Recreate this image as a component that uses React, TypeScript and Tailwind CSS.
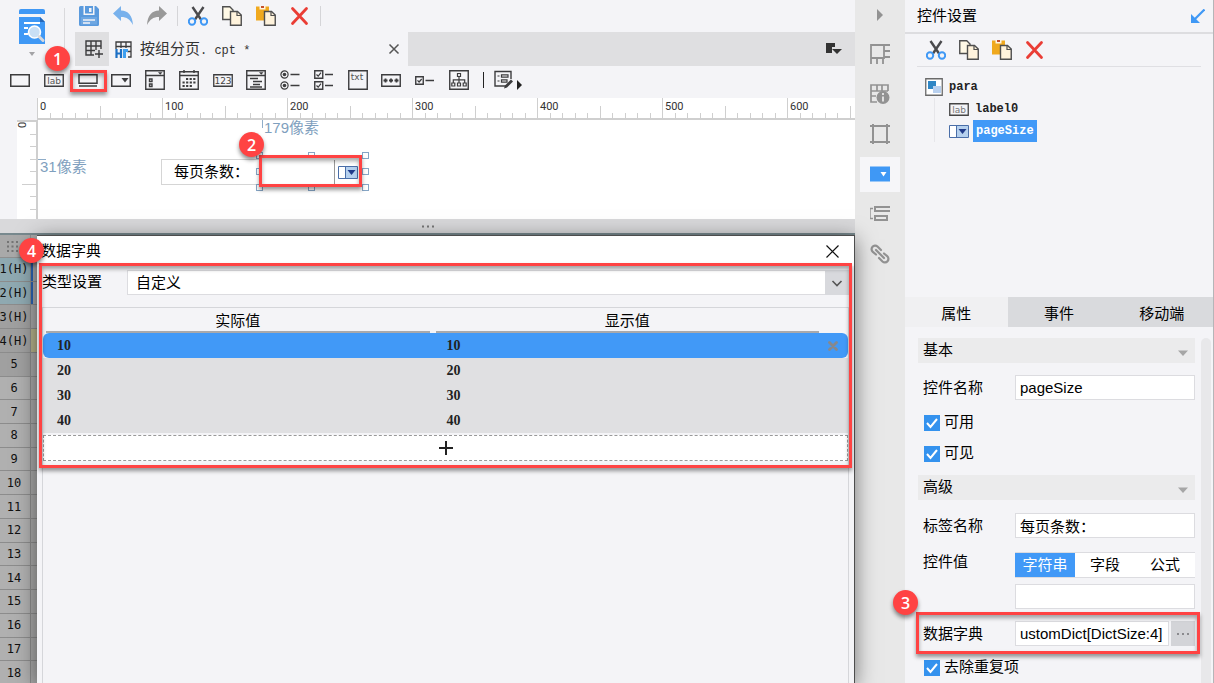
import { useState } from 'react';
import type { ReactNode } from 'react';
import clsx from 'clsx';

/* ---------- shared bits ---------- */

const CJK = "font-['Liberation_Sans','Noto_Sans_CJK_SC',sans-serif]";

function Badge({ n, className }: { n: number; className: string }) {
  return (
    <span
      className={clsx(
        "absolute z-30 flex h-[25px] w-[25px] items-center justify-center rounded-full bg-[#ff4343] font-['Open_Sans',sans-serif] text-[16px] font-semibold text-white shadow-[0_3px_4px_rgba(0,0,0,0.45)]",
        className
      )}
    >
      {n}
    </span>
  );
}

function Marker({ className }: { className: string }) {
  return (
    <span
      className={clsx(
        'pointer-events-none absolute z-20 border-[3px] border-[#ff4343] shadow-[0_3px_4px_rgba(0,0,0,0.4),inset_0_3px_4px_rgba(0,0,0,0.35)]',
        className
      )}
    />
  );
}

function Icon({ children, size = 20, className }: { children: ReactNode; size?: number; className?: string }) {
  return (
    <svg width={size} height={size} viewBox={`0 0 ${size} ${size}`} fill="none" className={clsx('block shrink-0', className)} aria-hidden="true">
      {children}
    </svg>
  );
}

/* ---------- edit icons ---------- */

const SaveIcon = () => (
  <Icon>
    <path d="M0 1.500A1.500 1.500 0 0 1 1.500 0H17l3 3v15.500A1.500 1.500 0 0 1 18.500 20h-17A1.500 1.500 0 0 1 0 18.500Z" fill="#5a9add" />
    <path d="M4.500 0h11v9h-11z" fill="#f4f4f7" />
    <path d="M6 0h8v7.500H6z" fill="#5a9add" />
    <path d="M10 2h2.500v4H10z" fill="#f4f4f7" />
    <path d="M2 11h16v7.500H2z" fill="#6ea7e2" />
    <path d="M4 14h12M4 17h7" stroke="#f4f4f7" strokeWidth="1.500" />
  </Icon>
);

const UndoIcon = () => (
  <Icon>
    <path d="M0 7.500 8 0v4.500c7 0 11.500 5 12 14.500-3-5.500-6-8-12-8V15Z" fill="#78b1ec" />
  </Icon>
);

const RedoIcon = () => (
  <Icon>
    <path d="M20 7.500 12 0v4.500C5 4.500.5 9.500 0 19c3-5.500 6-8 12-8V15Z" fill="#999" />
  </Icon>
);

const CutIcon = () => (
  <Icon>
    <path d="M4.500 1 13 13.500M15.500 1 7 13.500" stroke="#4a4a4d" strokeWidth="2.400" />
    <circle cx="4" cy="15.500" r="3.200" stroke="#3f98f5" strokeWidth="2" />
    <circle cx="16" cy="15.500" r="3.200" stroke="#3f98f5" strokeWidth="2" />
  </Icon>
);

const CopyIcon = () => (
  <Icon>
    <path d="M.75.75h7L11 4v9.500H.75Z" fill="#fff9e6" stroke="#4f4f4f" strokeWidth="1.400" />
    <path d="M8.500 5.500h7L19.250 9v10.250H8.500Z" fill="#fff3dc" stroke="#4f4f4f" strokeWidth="1.400" />
    <path d="M15 5.500V9.500h4" stroke="#4f4f4f" strokeWidth="1.200" />
  </Icon>
);

const PasteIcon = () => (
  <Icon>
    <path d="M0 .5h13v14H0z" fill="#f0a91e" />
    <path d="M3.500 0h6v3.500h-6z" fill="#fff5e0" />
    <path d="M5 0h3v2H5z" fill="#c4502e" />
    <path d="M8.500 5.500h7L19.250 9v10.250H8.500Z" fill="#fff3dc" stroke="#4f4f4f" strokeWidth="1.400" />
    <path d="M15 5.500V9.500h4" stroke="#4f4f4f" strokeWidth="1.200" />
  </Icon>
);

const DeleteIcon = () => (
  <Icon>
    <path d="m2.500 2.500 14 15m0-15-14 15" stroke="#ea3d35" strokeWidth="2.800" strokeLinecap="round" />
  </Icon>
);

const editIcons = [
  { label: '剪切', Glyph: CutIcon },
  { label: '复制', Glyph: CopyIcon },
  { label: '粘贴', Glyph: PasteIcon },
  { label: '删除', Glyph: DeleteIcon },
];

/* ---------- widget toolbar ---------- */

const INK = '#3c3c3e';
const svgText = "font-['DejaVu_Sans',sans-serif]";

const widgets: { id: string; art: ReactNode }[] = [
  { id: 'textfield', art: <path d="M.75 4.750h18.500v11.500H.75z" stroke={INK} strokeWidth="1.500" /> },
  {
    id: 'label',
    art: (
      <>
        <path d="M.75 4.750h18.500v11.500H.75z" stroke={INK} strokeWidth="1.400" />
        <text x="10" y="14" textAnchor="middle" fontSize="9" fill="#555" className={svgText}>lab</text>
      </>
    ),
  },
  {
    id: 'button',
    art: <path d="M1 4.750h18v8.500H1zM1 16h18" stroke={INK} strokeWidth="1.500" />,
  },
  {
    id: 'combo',
    art: (
      <>
        <path d="M.75 4.750h18.500v11.500H.75z" stroke={INK} strokeWidth="1.500" />
        <path d="M10.500 8h7L14 12.500z" fill={INK} />
      </>
    ),
  },
  {
    id: 'combocheck',
    art: (
      <>
        <path d="M.75.75h18.500v18.500H.75zM1 5.500h18M4.500 9h2.500v2.500H4.500zM4.500 14h2.500v2.500H4.500z" stroke={INK} strokeWidth="1.400" />
        <path d="M13 2.200h4.500l-2.250 2.500z" fill={INK} />
      </>
    ),
  },
  {
    id: 'date',
    art: (
      <>
        <path d="M.75 1.750h18.500v17.500H.75zM1 5.500h18" stroke={INK} strokeWidth="1.400" />
        <path d="M5 0v3M15 0v3" stroke={INK} strokeWidth="1.500" />
        <path d="M7 9h10M3.500 12.500h13.500M3.500 16h10" stroke={INK} strokeWidth="2.200" strokeDasharray="2.200 1.400" />
      </>
    ),
  },
  {
    id: 'number',
    art: (
      <>
        <path d="M.75 4.750h18.500v11.500H.75z" stroke={INK} strokeWidth="1.300" />
        <text x="10" y="14" textAnchor="middle" fontSize="9" fill="#444" className={svgText}>123</text>
      </>
    ),
  },
  {
    id: 'tree',
    art: (
      <>
        <path d="M.75.75h18.500v18.500H.75zM1 5.500h18" stroke={INK} strokeWidth="1.400" />
        <path d="M13 2.200h4.500l-2.250 2.500z" fill={INK} />
        <path d="M4 8.500h8M7 11.500h9M7 14.500h7M4 17h12" stroke={INK} strokeWidth="1.300" />
      </>
    ),
  },
  {
    id: 'radiogroup',
    art: (
      <>
        <circle cx="4.500" cy="4.500" r="3.600" stroke={INK} strokeWidth="1.200" />
        <circle cx="4.500" cy="15.500" r="3.600" stroke={INK} strokeWidth="1.200" />
        <circle cx="4.500" cy="4.500" r="1.800" fill={INK} />
        <circle cx="4.500" cy="15.500" r="1.800" fill={INK} />
        <path d="M10.500 4.500h9M10.500 15.500h9" stroke={INK} strokeWidth="1.500" />
      </>
    ),
  },
  {
    id: 'checkgroup',
    art: (
      <>
        <path d="M.75.75h8v7.500h-8zM.75 11.750h8v7.500h-8z" stroke={INK} strokeWidth="1.400" />
        <path d="m2.500 4.500 1.700 1.700L7 2.700M2.500 15.500l1.700 1.700L7 13.700" stroke={INK} strokeWidth="1.200" />
        <path d="M11 4.500h8M11 15.500h8" stroke={INK} strokeWidth="1.500" />
      </>
    ),
  },
  {
    id: 'textarea',
    art: (
      <>
        <path d="M.75.75h18.500v18.500H.75z" stroke={INK} strokeWidth="1.400" />
        <text x="9" y="9.500" textAnchor="middle" fontSize="9" fill="#555" className={svgText}>txt</text>
      </>
    ),
  },
  {
    id: 'password',
    art: (
      <>
        <path d="M.75 4.750h18.500v11.500H.75z" stroke={INK} strokeWidth="1.400" />
        <path d="M2.500 10.500h4M8 10.500h4M13.500 10.500h4M4.500 8.500v4M10 8.500v4M15.500 8.500v4" stroke={INK} strokeWidth="1.800" />
      </>
    ),
  },
  {
    id: 'checkbox',
    art: (
      <>
        <path d="M.75 6.750h7.500v7.500H.75z" stroke={INK} strokeWidth="1.400" />
        <path d="m2.500 10.300 1.600 1.700L6.700 9" stroke={INK} strokeWidth="1.200" />
        <path d="M10.500 10.500h8.500" stroke={INK} strokeWidth="1.500" />
      </>
    ),
  },
  {
    id: 'viewtree',
    art: (
      <>
        <path d="M.75.75h18.500v18.500H.75z" stroke={INK} strokeWidth="1.400" />
        <path d="M8.500 3.500h3v3h-3zM2.800 13h3v3h-3zM8.500 13h3v3h-3zM14.200 13h3v3h-3zM10 6.500V13M4.300 13V9.800h11.400V13" stroke={INK} strokeWidth="1.200" />
      </>
    ),
  },
];

function WidgetBar() {
  return (
    <div className="relative flex h-8 items-center pb-1 pl-[10px]">
      <div className="flex w-[459px] justify-between">
        {widgets.map((w) => (
          <button key={w.id} type="button" aria-label={w.id}>
            <Icon>{w.art}</Icon>
          </button>
        ))}
      </div>
      <span className="ml-[14px] h-4 w-px bg-[#222]" />
      <button type="button" aria-label="form" className="ml-[10px] flex items-end">
        <Icon>
          <path d="M17 9V1.500H1V16h11" stroke={INK} strokeWidth="1.400" />
          <path d="M3.500 6h2M3.500 11h2M7.500 4.800H14v2.400H7.500zM7.500 9.800H13v2.400H7.500z" stroke={INK} strokeWidth="1.200" />
          <path d="m10 18.500 1-3 6-6 2 2-6 6z" fill={INK} />
        </Icon>
        <Icon size={10} className="ml-0.5">
          <path d="M1 0v10l5-5z" fill="#222" />
        </Icon>
      </button>
      <Marker className="left-[70px] top-1 h-[22px] w-[37px]" />
    </div>
  );
}

/* ---------- header ---------- */

function Header() {
  return (
    <header className="relative flex h-[66px]">
      <div className="flex w-16 flex-col items-center pt-2">
        <Icon size={36}>
          <path d="M5 3a2 2 0 0 1 2-2h22a2 2 0 0 1 2 2v3H5zM5 9h21l5 5v22H5z" fill="#3f98f5" />
          <path d="M26 9l5 5h-5z" fill="#2467b8" />
          <path d="M10 15h16M10 20h4M10 26h4" stroke="#fff" strokeWidth="2" />
          <circle cx="20.500" cy="24" r="6" fill="#c9dff5" stroke="#fff" strokeWidth="1.600" />
          <path d="m25 28.500 4 4" stroke="#d8d8dc" strokeWidth="3" strokeLinecap="round" />
        </Icon>
        <Icon size={8} className="mt-[6px]">
          <path d="M1 2h6L4 6z" fill="#a3a3a6" />
        </Icon>
      </div>
      <span className="mt-2 h-[40px] w-px bg-[#d9d9dc]" />
      <div className="flex min-w-0 flex-1 flex-col">
        <div className="flex h-8 items-center pl-[14px]">
          <div className="flex gap-[14px]">
            <button type="button" aria-label="保存"><SaveIcon /></button>
            <button type="button" aria-label="撤销"><UndoIcon /></button>
            <button type="button" aria-label="重做"><RedoIcon /></button>
          </div>
          <span className="mx-[10px] h-5 w-px bg-[#d5d5d8]" />
          <div className="flex gap-[14px]">
            {editIcons.map(({ label, Glyph }) => (
              <button key={label} type="button" aria-label={label}><Glyph /></button>
            ))}
          </div>
          <span className="mx-[10px] h-5 w-px bg-[#d5d5d8]" />
        </div>
        <div className="ml-[10px] flex flex-1 bg-[#dfdfe1]">
          <button type="button" aria-label="新建" className="flex w-[34px] items-center justify-center pl-1">
            <Icon size={18}>
              <path d="M16 9V1H1v14h8M1 6h15M1 10.500h9M6 1v14M11 1v9M14 10v8M10 14h8" stroke="#3c3c3e" strokeWidth="1.400" />
            </Icon>
          </button>
          <div className="flex w-[299px] items-center bg-[#f4f4f7] pl-[6px] pr-2">
            <Icon size={17}>
              <path d="M1 8V1h15v15h-3M1 5.500h15M6 1v6M11 1v6M16 10.500h-4" stroke="#3c3c3e" strokeWidth="1.300" />
              <path d="M1.500 8v9M6 8v9M1 12.500h5" stroke="#1c6fc4" strokeWidth="2.200" />
              <path d="M8 8h5v3h-2v6H8z" fill="#3fa0f0" />
            </Icon>
            <span className="ml-2 flex-1 whitespace-pre text-[15px] text-[#333]">
              按组分页<span className="font-['Liberation_Mono',monospace] text-[12px]">. cpt *</span>
            </span>
            <button type="button" aria-label="关闭">
              <Icon size={12}>
                <path d="m1.500 1.500 9 9m0-9-9 9" stroke="#555" strokeWidth="1.500" />
              </Icon>
            </button>
          </div>
          <button type="button" aria-label="文件列表" className="ml-auto mr-[13px]">
            <Icon size={16}>
              <path d="M0 2h9v4H6v6H0z" fill="#333" />
              <path d="M6 8h10l-5 5z" fill="#333" />
            </Icon>
          </button>
        </div>
      </div>
      <Badge n={1} className="left-[45px] top-[46px]" />
    </header>
  );
}

/* ---------- parameter pane ---------- */

const rulerMarks = [0, 100, 200, 300, 400, 500, 600];
const tickHeights = ['h-full', 'h-[5px]', 'h-[5px]', 'h-[5px]', 'h-[5px]', 'h-3', 'h-[5px]', 'h-[5px]', 'h-[5px]', 'h-[5px]'];
const tickWidths = ['w-full', 'w-[6px]', 'w-[6px]', 'w-[6px]', 'w-[6px]', 'w-[14px]', 'w-[6px]', 'w-[6px]', 'w-[6px]', 'w-[6px]'];

function HorizontalRuler() {
  return (
    <div className="ml-[37px] flex h-[22px] overflow-hidden border-b-2 border-[#cfcfcf] bg-white">
      {rulerMarks.map((mark) => (
        <div key={mark} className="relative flex w-[125px] shrink-0 items-end">
          <span className="absolute left-[3px] top-px font-['Roboto',sans-serif] text-[11px] leading-4 text-[#333]">{mark}</span>
          {tickHeights.map((h, i) => (
            <span key={i} className={clsx('flex-1 border-l border-[#cfcfcf]', h)} />
          ))}
        </div>
      ))}
    </div>
  );
}

function VerticalRuler() {
  return (
    <div className="relative ml-[17px] w-[21px] overflow-hidden border-r-2 border-t border-[#cfcfcf] bg-white">
      <span className="absolute left-[3px] top-0 -rotate-90 font-['Roboto',sans-serif] text-[11px] leading-[8px] text-[#333]">0</span>
      <div className="flex h-[125px] flex-col items-end">
        {tickWidths.map((w, i) => (
          <span key={i} className={clsx('flex-1 border-t border-[#cfcfcf]', w)} />
        ))}
      </div>
    </div>
  );
}

// resize handles around the selected combo box
const handles = [
  'left-[218px] top-[32px]', 'left-[270px] top-[32px]', 'left-[324px] top-[32px]',
  'left-[218px] top-[48px]', 'left-[324px] top-[48px]',
  'left-[218px] top-[64px]', 'left-[270px] top-[64px]', 'left-[324px] top-[64px]',
];

function ComboGlyph() {
  return (
    <svg width="20" height="13" viewBox="0 0 20 13" className="block shrink-0" aria-hidden="true">
      <path d="M.5.5h19v12H.5z" fill="#fff" stroke="#4a6ea8" />
      <path d="M7.500 1H19v11H7.500z" fill="#b5d0ee" />
      <path d="M7.500 1v11" stroke="#4a6ea8" />
      <path d="M9.500 4h8l-4 5z" fill="#1f3a8a" />
    </svg>
  );
}

function ParamPane() {
  return (
    <div className="flex h-[99px]">
      <VerticalRuler />
      <div className="relative flex-1 bg-white">
        <span className="absolute left-[224px] top-0 h-2 border-l border-[#8fadc9]" />
        <span className="absolute left-[226px] top-0 text-[15px] leading-4 text-[#7f9fbe]">179像素</span>
        <span className="absolute left-0 top-[39px] w-2 border-t border-[#8fadc9]" />
        <span className="absolute left-[2px] top-[39px] text-[15px] leading-4 text-[#7f9fbe]">31像素</span>
        <div className="absolute left-[123px] top-[39px] flex h-[26px] w-[100px] items-center border border-[#d5d5d5] pl-3 text-[15px]">
          每页条数：
        </div>
        {handles.map((pos) => (
          <span key={pos} className={clsx('absolute h-[7px] w-[7px] border border-[#86a6c6] bg-white', pos)} />
        ))}
        <div className="absolute left-[223px] top-[38px] flex h-[28px] w-[100px] items-center justify-end bg-white pr-[3px]">
          <span className="mr-[3px] h-6 w-px bg-[#999]" />
          <ComboGlyph />
        </div>
        <Marker className="left-[221px] top-[35px] h-8 w-[103px]" />
        <Badge n={2} className="left-[201px] top-3" />
      </div>
    </div>
  );
}

/* ---------- report grid + dialog ---------- */

const gridRows = ['1(H)', '2(H)', '3(H)', '4(H)', ...Array.from({ length: 14 }, (_, i) => String(i + 5))];

function RowHeaders() {
  return (
    <div className="flex h-full flex-col bg-[#a9a9a9]">
      <div className="h-[23px] w-[31px] border-b border-r border-[#8f8f8f] pl-[7px] pt-[6px]">
        <Icon size={12}>
          <path d="M0 1h12M0 5.500h12M0 10h12" stroke="#757575" strokeWidth="2" strokeDasharray="2 2.500" />
        </Icon>
      </div>
      <ol className="-mb-0.5 grid flex-1 auto-rows-fr">
        {gridRows.map((row, i) => (
          <li key={row} className="flex border-b border-[#8c8c8c]">
            <span
              className={clsx(
                "flex w-[31px] items-center justify-center border-r border-[#8c8c8c] pr-[2px] font-['DejaVu_Sans_Mono',monospace] text-[12px] text-[#111]",
                i < 2 ? 'bg-[#8fa9b1]' : i < 5 ? 'bg-[#a0a0a0]' : 'bg-[#b0b0b0]'
              )}
            >
              {row}
            </span>
            <span className={clsx('flex-1', i < 2 && 'border-l-2 border-[#2a62b4]', i === 3 && 'bg-[#b8b48c]')} />
          </li>
        ))}
      </ol>
    </div>
  );
}

const dictEntries = ['10', '20', '30', '40'];

function DictDialog() {
  const [selected, setSelected] = useState('10');

  return (
    <section
      role="dialog"
      aria-label="数据字典"
      className="absolute bottom-0 left-[37px] right-0 top-0 flex flex-col border-r border-t border-[#4d4d4d] bg-[#f4f4f7] shadow-[0_4px_20px_rgba(0,0,0,0.5)]"
    >
      <div className="flex h-[30px] items-center justify-between bg-white pl-1 pr-[15px]">
        <h2 className="text-[15px]">数据字典</h2>
        <button type="button" aria-label="关闭">
          <Icon size={13}>
            <path d="m.5.5 12 12m0-12-12 12" stroke="#111" strokeWidth="1.200" />
          </Icon>
        </button>
      </div>

      <div className="flex items-center pb-3 pl-[5px] pr-[5px] pt-1">
        <label htmlFor="dict-type" className="w-[85px] text-[15px]">类型设置</label>
        <div className="relative flex-1">
          <select id="dict-type" className="block h-[25px] w-full appearance-none border border-[#dcdce0] bg-white pl-2 text-[15px] leading-5">
            <option>自定义</option>
          </select>
          <span className="pointer-events-none absolute right-0 top-0 flex h-[25px] w-6 items-center justify-center bg-[#d8d9dd]">
            <Icon size={12}>
              <path d="m1.500 4 4.500 4.500L10.500 4" stroke="#555" strokeWidth="1.600" />
            </Icon>
          </span>
        </div>
      </div>

      <div className="mx-[5px] flex-1 border border-b-0 border-[#d5d6da]">
        <table className="w-full table-fixed border-separate border-spacing-0">
          <thead>
            <tr className="h-[25px] text-[15px]">
              <th className="px-[3px] py-0 font-normal"><div className="h-[25px] border-b-2 border-[#a9a9ab] leading-[25px]">实际值</div></th>
              <th className="px-[3px] py-0 font-normal"><div className="h-[25px] border-b-2 border-[#a9a9ab] leading-[25px]">显示值</div></th>
              <th className="w-[26px]" />
            </tr>
          </thead>
          <tbody>
            {dictEntries.map((value) => {
              const isSelected = value === selected;
              return (
                <tr
                  key={value}
                  onClick={() => setSelected(value)}
                  className={clsx(
                    "h-[25px] font-['Liberation_Serif',serif] text-[14px] font-bold leading-5 text-[#222]",
                    !isSelected && 'bg-[#e0e0e2]'
                  )}
                >
                  <td className={clsx('px-[14px] py-0', isSelected && 'rounded-l-md bg-[#4199f7]')}>{value}</td>
                  <td className={clsx('px-[14px] py-0', isSelected && 'bg-[#4199f7]')}>{value}</td>
                  <td className={clsx('px-[6px] py-0', isSelected && 'rounded-r-md bg-[#4199f7]')}>
                    {isSelected && (
                      <button type="button" aria-label="删除" className="block">
                        <Icon size={10}>
                          <path d="m1.500 1.500 7 7m0-7-7 7" stroke="#87888c" strokeWidth="2.800" strokeLinecap="round" />
                        </Icon>
                      </button>
                    )}
                  </td>
                </tr>
              );
            })}
          </tbody>
        </table>
        <button type="button" aria-label="添加" className="mt-0.5 flex h-[26px] w-full items-center justify-center border border-dashed border-[#999] bg-white">
          <Icon size={16}>
            <path d="M8 1v14M1 8h14" stroke="#222" strokeWidth="2" />
          </Icon>
        </button>
      </div>

      <Marker className="left-0.5 right-0.5 top-[27px] h-[205px]" />
      <Badge n={4} className="-left-[18px] top-0.5" />
    </section>
  );
}

/* ---------- icon rail ---------- */

const GREY = '#929292';

const railItems: { id: string; art: ReactNode; active?: boolean }[] = [
  {
    id: 'cell-element',
    art: <path d="M1 20V1h19M1 14h13V1M14 7h6M14 13h6M7 14v6M13 14v6" stroke={GREY} strokeWidth="1.800" />,
  },
  {
    id: 'cell-attr',
    art: (
      <>
        <path d="M18 7V1H1v17h6M1 7h17M7 1v6M12 1v6M1 12h5" stroke={GREY} strokeWidth="1.700" />
        <circle cx="13" cy="13.500" r="6.500" fill={GREY} />
        <path d="M13 9v2M13 12.500v5" stroke="#e8e8e8" strokeWidth="1.800" />
      </>
    ),
  },
  {
    id: 'float',
    art: <path d="M3 0v20M17 0v20M0 2h20M0 18h20" stroke={GREY} strokeWidth="2" />,
  },
  {
    id: 'widget',
    active: true,
    art: (
      <>
        <path d="M0 2.500h20v15H0z" fill="#3f98f5" />
        <path d="M10.500 8h6l-3 4.500z" fill="#fff" />
      </>
    ),
  },
  {
    id: 'condition',
    art: (
      <>
        <path d="M3 4.500H0v10h3" stroke={GREY} strokeWidth="1.400" />
        <path d="M5 3h16v4H5zM5 12h12v4H5z" stroke={GREY} strokeWidth="2" />
      </>
    ),
  },
  {
    id: 'hyperlink',
    art: (
      <path
        d="M6 10.500 2.800 7.800a3.500 3.500 0 0 1-.3-5 3.500 3.500 0 0 1 5-.3L11 6M6 6l8 8M14 9.500l3.200 2.700a3.500 3.500 0 0 1 .3 5 3.500 3.500 0 0 1-5 .3L9 14"
        stroke={GREY}
        strokeWidth="2.200"
        strokeLinecap="round"
      />
    ),
  },
];

function Rail() {
  return (
    <nav className="flex w-[50px] flex-col items-center bg-[#e8e8e8]">
      <button type="button" aria-label="收起" className="flex h-[34px] items-center pb-1">
        <Icon size={12}>
          <path d="M3 0v12l6-6z" fill={GREY} />
        </Icon>
      </button>
      {railItems.map((item) => (
        <div key={item.id} className="flex h-10 items-center">
          <button
            type="button"
            aria-label={item.id}
            className={clsx('flex h-[35px] w-10 items-center justify-center', item.active && 'bg-[#f6f6f9]')}
          >
            <Icon>{item.art}</Icon>
          </button>
        </div>
      ))}
    </nav>
  );
}

/* ---------- property panel ---------- */

const field = 'h-[25px] w-full border border-[#dcdce0] bg-white px-1 text-[15px]';

function SectionTitle({ children }: { children: ReactNode }) {
  return (
    <button type="button" className="flex h-[25px] w-full items-center justify-between bg-[#ebebec] pl-[5px] pr-[7px] text-[15px]">
      {children}
      <Icon size={10} className="mt-1">
        <path d="M0 2.500h10L5 8z" fill="#a6a6a6" />
      </Icon>
    </button>
  );
}

function Check({ id, label }: { id: string; label: string }) {
  return (
    <div className="flex h-[31px] items-center gap-1 pl-1.5">
      <span className="relative">
        <input id={id} type="checkbox" defaultChecked className="peer block h-4 w-4 appearance-none border border-[#3492ee] bg-white checked:bg-[#3492ee]" />
        <Icon size={16} className="pointer-events-none absolute left-0 top-0 opacity-0 peer-checked:opacity-100">
          <path d="m3 8 3.500 4L13 4" stroke="#fff" strokeWidth="2" />
        </Icon>
      </span>
      <label htmlFor={id} className="text-[15px]">{label}</label>
    </div>
  );
}

function Row({ label, htmlFor, children, className }: { label: string; htmlFor: string; children: ReactNode; className?: string }) {
  return (
    <div className={clsx('flex items-start pl-[5px]', className)}>
      <label htmlFor={htmlFor} className="w-[92px] shrink-0 text-[15px] leading-[25px]">{label}</label>
      <div className="min-w-0 flex-1">{children}</div>
    </div>
  );
}

function WidgetTree() {
  return (
    <div className="h-[230px] pl-5 pt-[9px] font-['Liberation_Mono',monospace] text-[12px] font-bold text-[#222]">
      <div className="flex h-[22px] items-center gap-1.5">
        <Icon size={18}>
          <path d="M.75.75h16.500v16.500H.75z" fill="#fff" stroke="#6a6a6a" strokeWidth="1.300" />
          <path d="M3 3h8v8H3z" fill="#2f86c5" />
          <path d="M8 8h8v7H8z" fill="#b8d0ef" />
        </Icon>
        para
      </div>
      <div className="ml-[9px] border-l border-[#e6e6ea] pl-[14px]">
        <div className="flex h-[22px] items-center gap-1.5">
          <svg width="20" height="13" viewBox="0 0 20 13" className="block" aria-hidden="true">
            <path d="M.75.75h18.500v11.500H.75z" fill="#f4f4f7" stroke="#444" strokeWidth="1.300" />
            <text x="10" y="10" textAnchor="middle" fontSize="9" fontWeight="400" fill="#777" className={svgText}>lab</text>
          </svg>
          label0
        </div>
        <div className="flex h-[22px] items-center gap-1">
          <ComboGlyph />
          <span className="flex h-[22px] items-center bg-[#4199f7] px-[3px] text-white">pageSize</span>
        </div>
      </div>
    </div>
  );
}

const valueTypes = ['字符串', '字段', '公式'];
const panelTabs = ['属性', '事件', '移动端'];

function PropertyPanel() {
  const [valueType, setValueType] = useState('字符串');
  const [tab, setTab] = useState('属性');

  return (
    <aside className="relative z-20 flex w-[309px] flex-col border-r border-[#b5b5b8] bg-[#f4f4f7]">
      <div className="flex h-[34px] items-center justify-between border-b-2 border-[#dddde0] pl-3 pr-2 text-[15px]">
        控件设置
        <button type="button" aria-label="弹出">
          <Icon size={14}>
            <path d="M13.500.5 3 11" stroke="#3f98f5" strokeWidth="2.200" />
            <path d="M0 5v9h9z" fill="#3f98f5" />
          </Icon>
        </button>
      </div>
      <div className="mx-3 flex h-[33px] items-center gap-[13px] border-b border-[#dfdfe3] pl-[9px]">
        {editIcons.map(({ label, Glyph }) => (
          <button key={label} type="button" aria-label={label}><Glyph /></button>
        ))}
      </div>

      <WidgetTree />

      <div className="flex h-[30px]">
        {panelTabs.map((name) => (
          <button
            key={name}
            type="button"
            onClick={() => setTab(name)}
            className={clsx('flex-1 pt-1 text-[15px]', tab === name ? 'bg-[#f0f0f2]' : 'bg-[#d9dadd]')}
          >
            {name}
          </button>
        ))}
      </div>

      <div className="flex flex-1 gap-1.5 pl-[13px] pr-0.5 pt-[11px]">
        <div className="relative min-w-0 flex-1">
          <SectionTitle>基本</SectionTitle>
          <Row label="控件名称" htmlFor="widget-name" className="mb-[7px] mt-3">
            <input id="widget-name" defaultValue="pageSize" className={field} />
          </Row>
          <Check id="enabled" label="可用" />
          <Check id="visible" label="可见" />
          <div className="mt-[6px]">
            <SectionTitle>高级</SectionTitle>
          </div>
          <Row label="标签名称" htmlFor="label-name" className="mt-[13px]">
            <input id="label-name" defaultValue="每页条数：" className={field} />
          </Row>
          <Row label="控件值" htmlFor="widget-value" className="mt-[10px]">
            <div className="mt-[3px] flex h-[26px] border-y border-[#dcdce0] bg-white">
              {valueTypes.map((type) => (
                <button
                  key={type}
                  type="button"
                  onClick={() => setValueType(type)}
                  className={clsx('flex-1 text-[15px] leading-6', valueType === type && 'bg-[#4199f7] text-white')}
                >
                  {type}
                </button>
              ))}
            </div>
            <input id="widget-value" className={clsx(field, 'mt-[6px] block')} />
          </Row>
          <Row label="数据字典" htmlFor="dict" className="mb-[6px] mt-3">
            <div className="flex">
              <input id="dict" defaultValue="ustomDict[DictSize:4]" className="h-[25px] min-w-0 flex-1 border border-[#dcdce0] bg-white pl-1 text-[15px]" />
              <button type="button" aria-label="编辑数据字典" className="ml-0.5 flex w-6 items-center justify-center bg-[#d3d4d8]">
                <Icon size={14}>
                  <path d="M1 7h2M6 7h2M11 7h2" stroke="#8a8a8e" strokeWidth="2" />
                </Icon>
              </button>
            </div>
          </Row>
          <Check id="distinct" label="去除重复项" />
          <Marker className="-left-0.5 -right-[5px] top-[274px] h-[42px]" />
          <Badge n={3} className="-left-[25px] top-[252px]" />
        </div>
        <div className="w-2.5 rounded-t-full bg-[#e8e8ea]" />
      </div>
    </aside>
  );
}

export default function App() {
  return (
    <div className={clsx('flex h-screen overflow-hidden bg-[#f4f4f7] text-black', CJK)}>
      <main className="relative z-10 flex min-w-0 flex-1 flex-col bg-[#f4f4f7]">
        <Header />
        <WidgetBar />
        <HorizontalRuler />
        <ParamPane />
        <div className="flex h-[14px] shrink-0 items-center justify-center bg-[#d9d9db]">
          <Icon size={14}>
            <path d="M1 7.500h2M6 7.500h2M11 7.500h2" stroke="#777" strokeWidth="2" />
          </Icon>
        </div>
        <div className="relative min-h-0 flex-1 border-t-2 border-[#78898e]">
          <div className="h-full w-[37px]">
            <RowHeaders />
          </div>
          <DictDialog />
        </div>
      </main>
      <Rail />
      <PropertyPanel />
    </div>
  );
}
